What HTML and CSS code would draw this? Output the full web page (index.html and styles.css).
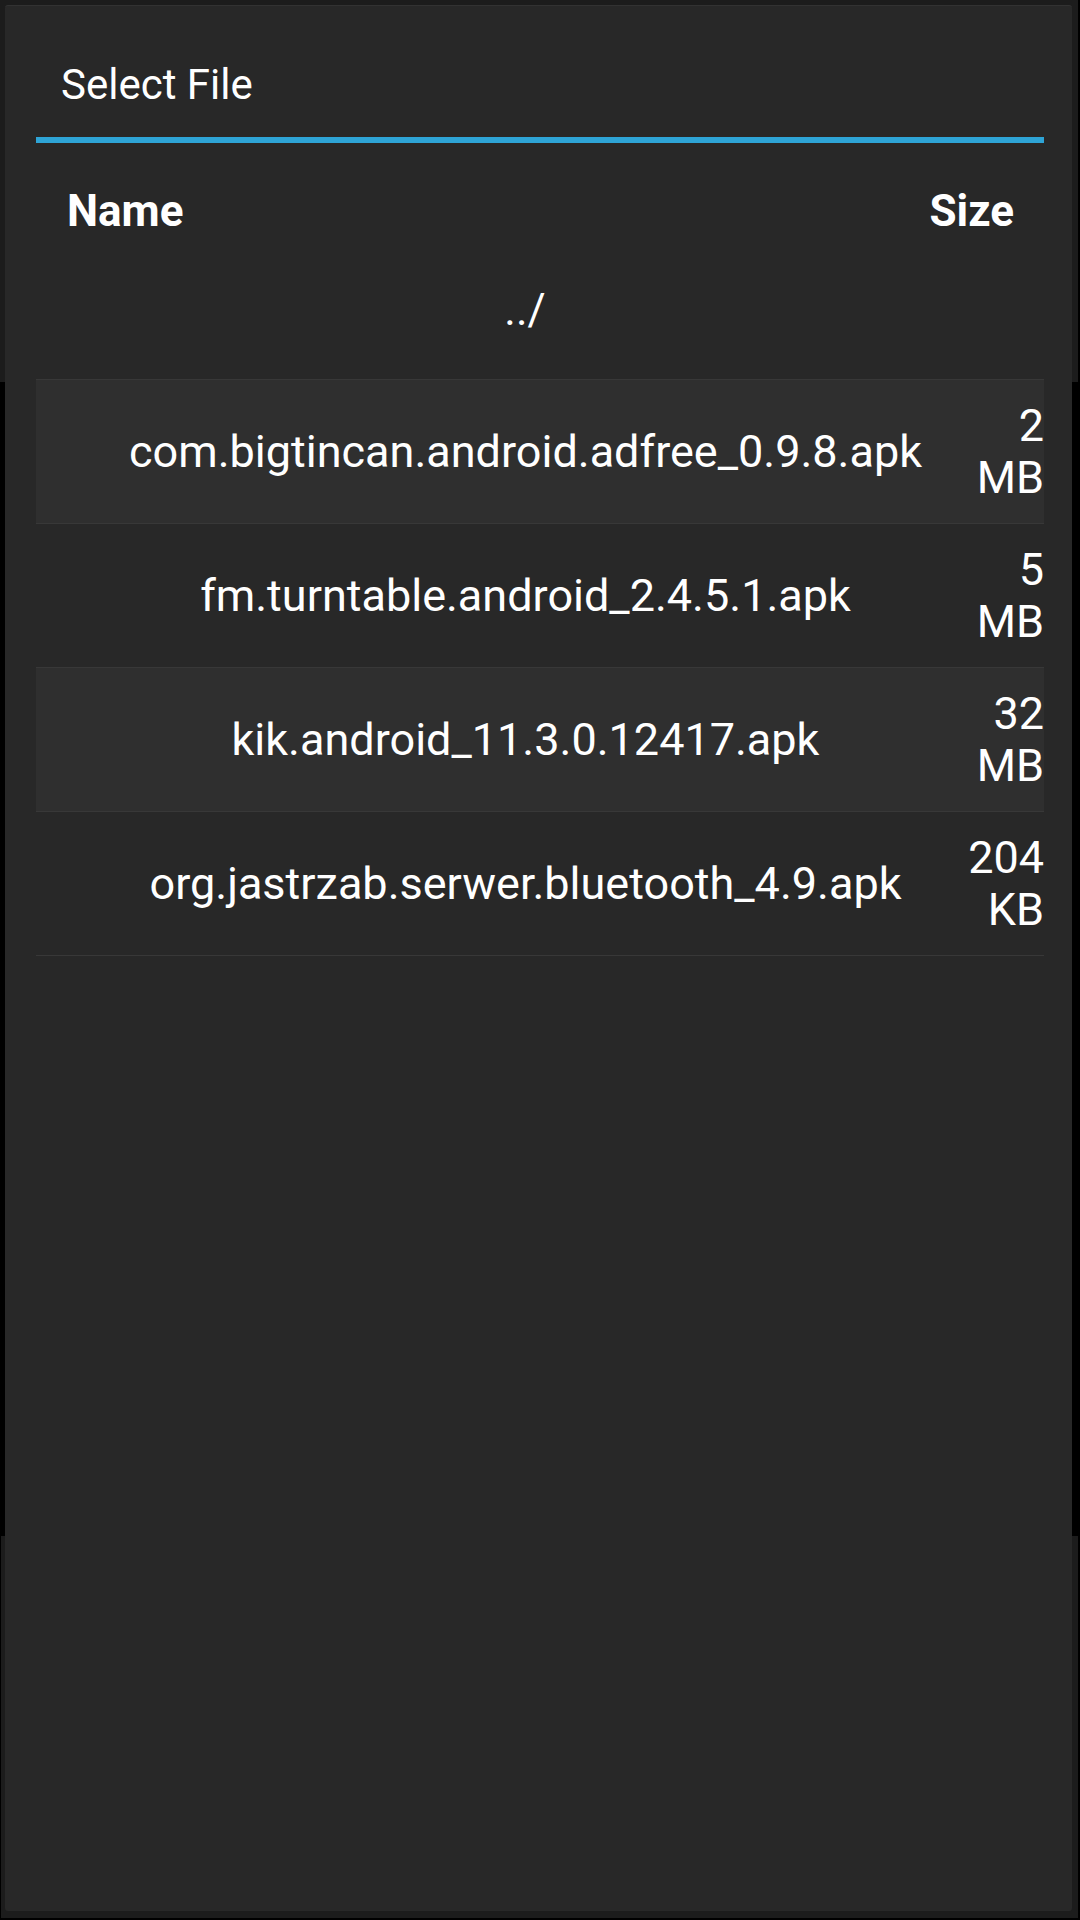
FILE: index.html
```html
<!DOCTYPE html>
<html>
<head>
<meta charset="utf-8">
<link rel="stylesheet" href="styles.css">
</head>
<body>
<div class="dialog">
  <div class="title">Select File</div>
  <div class="divider"></div>
  <div class="head">
    <span>Name</span>
    <span>Size</span>
  </div>
  <div class="up">../</div>
  <div class="list">
    <div class="row alt"><div class="name">com.bigtincan.android.adfree_0.9.8.apk</div><div class="size">2 MB</div></div>
    <div class="row"><div class="name">fm.turntable.android_2.4.5.1.apk</div><div class="size">5 MB</div></div>
    <div class="row alt"><div class="name">kik.android_11.3.0.12417.apk</div><div class="size">32 MB</div></div>
    <div class="row"><div class="name">org.jastrzab.serwer.bluetooth_4.9.apk</div><div class="size">204 KB</div></div>
  </div>
</div>
</body>
</html>
```

FILE: styles.css
```css
html, body {
  margin: 0;
  padding: 0;
}
body {
  width: 1080px;
  height: 1920px;
  overflow: hidden;
  font-family: Roboto, "Noto Sans", sans-serif;
  color: #ffffff;
  background:
    linear-gradient(#1c1c1c, #1c1c1c) 0 0 / 1078px 382px no-repeat,
    linear-gradient(#1c1c1c, #1c1c1c) 1px 1536px / 1077px 382px no-repeat,
    #000000;
}
.dialog {
  box-sizing: border-box;
  margin: 5px 0 0 5px;
  width: 1067px;
  height: 1906px;
  background: #282828;
  border-top: 1px solid #323232;
  border-radius: 3px;
  padding: 0 28px 0 31px;
}
.title {
  box-sizing: border-box;
  height: 131px;
  padding: 54px 0 0 25px;
  font-size: 42px;
  line-height: normal;
}
.divider {
  height: 6px;
  background: #2ea4d6;
}
.head {
  display: flex;
  justify-content: space-between;
  padding: 42px 30px 0 31px;
  font-size: 44px;
  font-weight: 700;
  line-height: normal;
}
.up {
  margin-top: 47px;
  padding: 0 30px 43px 0;
  text-align: center;
  font-size: 44px;
  line-height: normal;
}
.list {
  border-bottom: 1px solid #383838;
}
.row {
  box-sizing: border-box;
  height: 144px;
  border-top: 1px solid #383838;
  display: grid;
  grid-template-columns: 1fr 78px;
  align-items: center;
  font-size: 45px;
  line-height: 52px;
}
.row.alt {
  background: #2f2f2f;
}
.name {
  padding-left: 49px;
  text-align: center;
  white-space: nowrap;
}
.size {
  text-align: right;
}
```
